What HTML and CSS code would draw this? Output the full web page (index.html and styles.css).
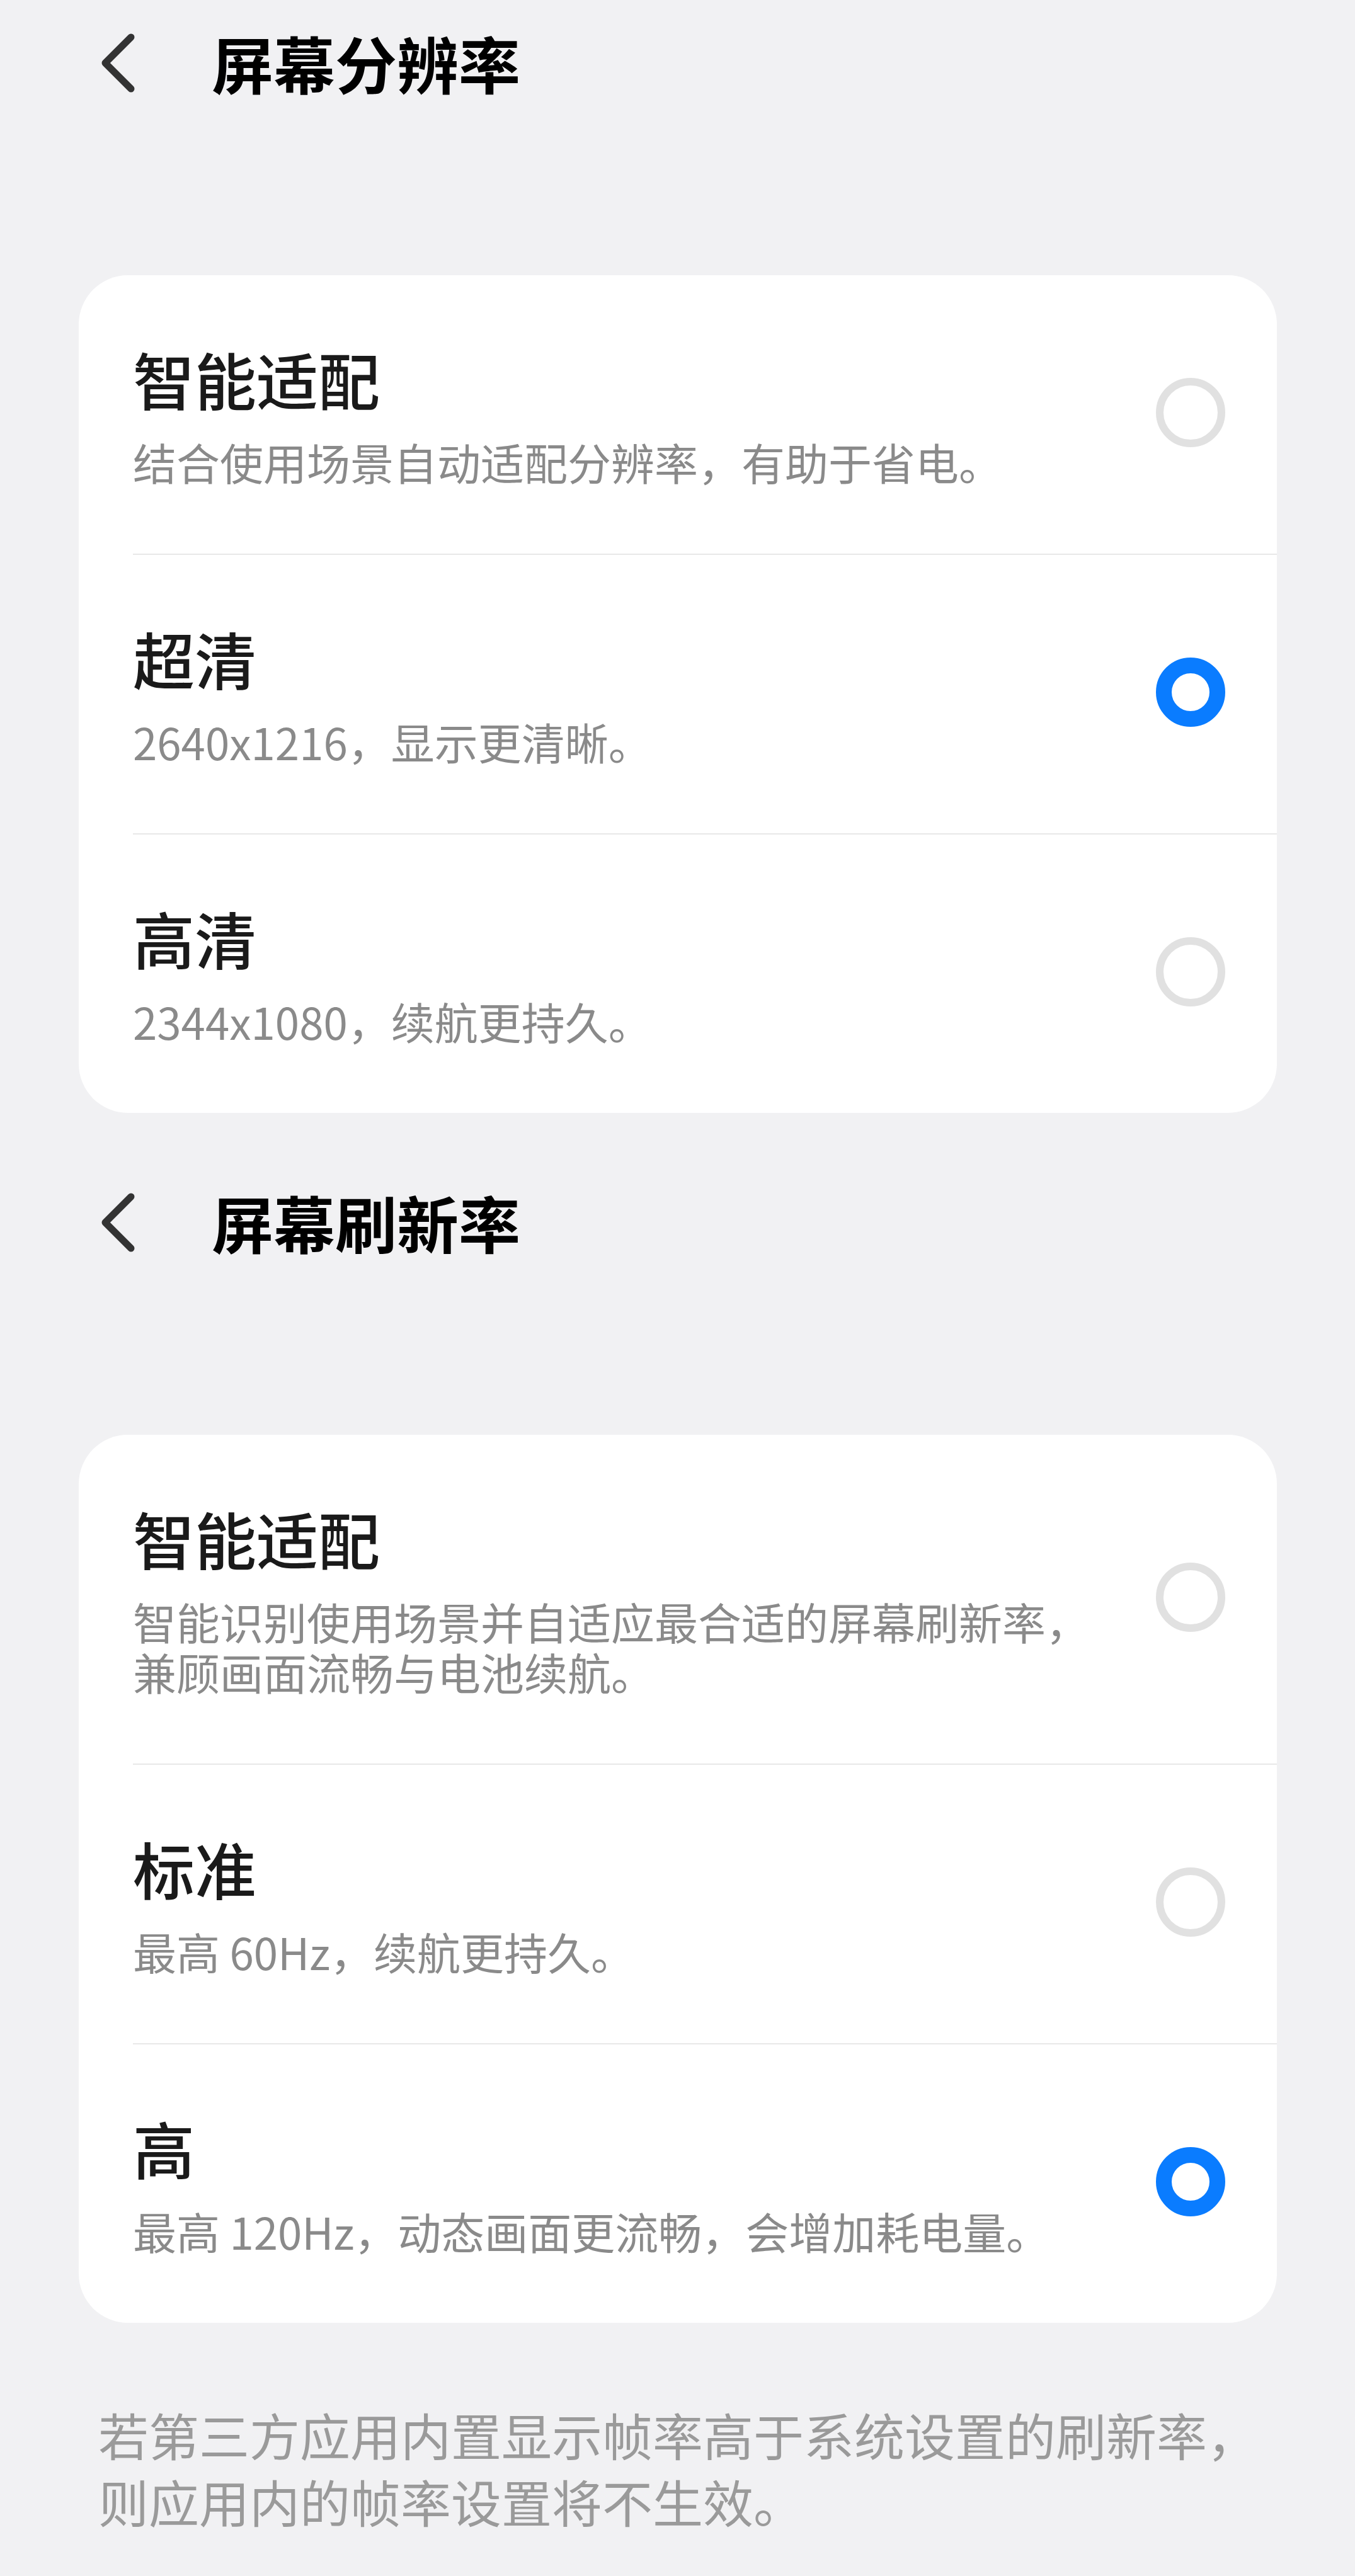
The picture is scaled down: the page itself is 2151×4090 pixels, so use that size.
FILE: index.html
```html
<!DOCTYPE html>
<html lang="zh-CN">
<head>
  <meta charset="UTF-8">
  <meta name="viewport" content="width=device-width, initial-scale=1.0">
  <title>屏幕分辨率</title>
  <link rel="stylesheet" href="styles.css">
</head>
<body>
  <div class="page">

    <header class="topbar">
      <svg class="back" viewBox="0 0 70 110" width="70" height="110">
        <path d="M58 14 L17 55 L58 96" />
      </svg>
      <h1>屏幕分辨率</h1>
    </header>

    <section class="card">
      <div class="row">
        <div class="text">
          <div class="title">智能适配</div>
          <div class="desc">结合使用场景自动适配分辨率，有助于省电。</div>
        </div>
        <span class="radio"></span>
      </div>
      <div class="row">
        <div class="text">
          <div class="title">超清</div>
          <div class="desc">2640x1216，显示更清晰。</div>
        </div>
        <span class="radio on"></span>
      </div>
      <div class="row">
        <div class="text">
          <div class="title">高清</div>
          <div class="desc">2344x1080，续航更持久。</div>
        </div>
        <span class="radio"></span>
      </div>
    </section>

    <header class="topbar second">
      <svg class="back" viewBox="0 0 70 110" width="70" height="110">
        <path d="M58 14 L17 55 L58 96" />
      </svg>
      <h1>屏幕刷新率</h1>
    </header>

    <section class="card">
      <div class="row">
        <div class="text">
          <div class="title">智能适配</div>
          <div class="desc">智能识别使用场景并自适应最合适的屏幕刷新率，<br>兼顾画面流畅与电池续航。</div>
        </div>
        <span class="radio"></span>
      </div>
      <div class="row">
        <div class="text">
          <div class="title">标准</div>
          <div class="desc">最高 60Hz，续航更持久。</div>
        </div>
        <span class="radio"></span>
      </div>
      <div class="row">
        <div class="text">
          <div class="title">高</div>
          <div class="desc">最高 120Hz，动态画面更流畅，会增加耗电量。</div>
        </div>
        <span class="radio on"></span>
      </div>
    </section>

    <p class="note">若第三方应用内置显示帧率高于系统设置的刷新率，<br>则应用内的帧率设置将不生效。</p>

  </div>
</body>
</html>
```

FILE: styles.css
```css
body {
  margin: 0;
  background-color: #f1f1f3;
  font-family: "Noto Sans CJK SC", "Noto Sans", sans-serif;
  color: #1a1a1a;
}
.page {
  padding: 0 124px 0 125px;
}
.topbar {
  display: flex;
  align-items: center;
  height: 200px;
}
.topbar.second {
  margin-top: 74px;
}
.back {
  margin-left: 25px;
  flex-shrink: 0;
}
.back path {
  fill: none;
  stroke: #333;
  stroke-width: 11;
  stroke-linecap: round;
  stroke-linejoin: round;
}
.topbar h1 {
  margin: 0 0 5px 116px;
  font-size: 98px;
  line-height: 1;
  font-weight: 700;
  color: #000;
}
.card {
  background: #fff;
  border-radius: 78px;
  margin-top: 237px;
  padding-left: 86px;
}
.row {
  display: flex;
  align-items: center;
  padding: 99px 82px 106px 0;
}
.row + .row {
  border-top: 2px solid #e8e8e8;
}
.text {
  flex: 1;
}
.title {
  font-size: 98px;
  line-height: 128px;
  font-weight: 500;
  color: #1a1a1a;
}
.desc {
  margin-top: 29px;
  font-size: 69px;
  line-height: 80px;
  color: #8a8a8a;
}
.radio {
  width: 110px;
  height: 110px;
  box-sizing: border-box;
  border-radius: 50%;
  border: 12px solid #e1e1e1;
  flex-shrink: 0;
}
.radio.on {
  border: 25px solid #0a7cff;
}
.note {
  margin: 123px 0 0;
  padding: 0 0 0 31px;
  font-size: 80px;
  line-height: 106px;
  color: #9a9a9a;
}
```
